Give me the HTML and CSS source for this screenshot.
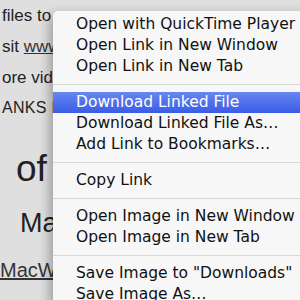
FILE: index.html
```html
<!DOCTYPE html>
<html lang="en">
<head>
    <meta charset="UTF-8">
    <title>Context menu</title>
    <link rel="stylesheet" href="styles.css">
</head>
<body>
    <div class="page">
        <p class="line l1">files to y</p>
        <p class="line l2">sit <a href="#">www.</a></p>
        <p class="line l3">ore vide</p>
        <p class="line l4">ANKS FO</p>
        <p class="big">of K</p>
        <p class="mid">Mac</p>
        <p class="link"><a href="#">MacWo</a></p>
    </div>
    <div class="menu">
        <div class="item">Open with QuickTime Player</div>
        <div class="item">Open Link in New Window</div>
        <div class="item">Open Link in New Tab</div>
        <div class="sep"></div>
        <div class="item active">Download Linked File</div>
        <div class="item">Download Linked File As…</div>
        <div class="item">Add Link to Bookmarks…</div>
        <div class="sep"></div>
        <div class="item">Copy Link</div>
        <div class="sep"></div>
        <div class="item">Open Image in New Window</div>
        <div class="item">Open Image in New Tab</div>
        <div class="sep"></div>
        <div class="item">Save Image to "Downloads"</div>
        <div class="item">Save Image As…</div>
    </div>
</body>
</html>
```
FILE: styles.css
```css
body {
    margin: 0;
    width: 300px;
    height: 300px;
    overflow: hidden;
    background: #dfdfdf;
    font-family: 'Liberation Sans', Arial, sans-serif;
    color: #222;
    position: relative;
}
.page {
    padding-left: 2px;
}
.page p {
    margin: 0;
    white-space: nowrap;
}
.page a {
    color: #333;
}
.line {
    font-size: 17px;
    height: 31px;
}
.l1 {
    padding-top: 6px;
}
.l4 {
    font-size: 16px;
    letter-spacing: 0.3px;
}
.big {
    font-size: 37px;
    margin-top: 18px !important;
    padding-left: 14px;
}
.mid {
    font-size: 27px;
    padding-left: 18px;
    margin-top: 18px !important;
}
.link {
    font-size: 20px;
    margin-top: 20px !important;
    margin-left: -2px !important;
}
.menu {
    position: absolute;
    left: 53px;
    top: 11px;
    width: 280px;
    padding-top: 3px;
    background: #f7f7f7;
    border-radius: 5px 0 0 0;
    box-shadow: -3px 4px 12px rgba(0,0,0,0.32);
    font-family: 'DejaVu Sans', sans-serif;
    font-size: 15.5px;
    color: #111;
}
.item {
    height: 21px;
    line-height: 21px;
    padding-left: 23px;
    white-space: nowrap;
}
.item.active {
    color: #fff;
    background: linear-gradient(#6787f0, #3a5ce6);
}
.sep {
    height: 1px;
    background: #d8d8d8;
    margin: 7px 0;
}
```
